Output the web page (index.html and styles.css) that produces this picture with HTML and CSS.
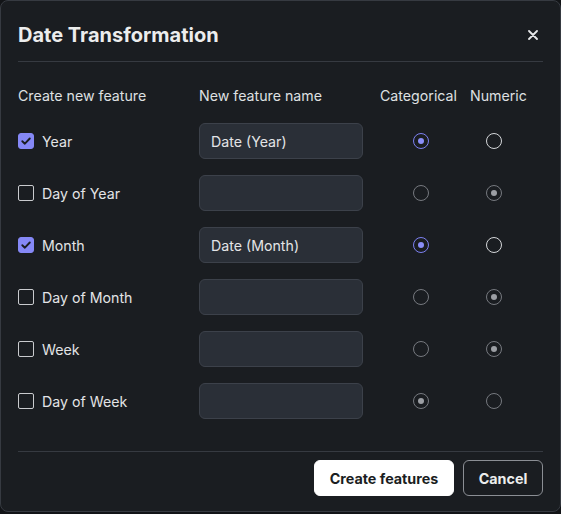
FILE: index.html
```html
<!DOCTYPE html>
<html>
<head>
<meta charset="utf-8">
<link rel="stylesheet" href="styles.css">
</head>
<body>
<div class="modal">
  <div class="head">
    <h1 class="title">Date Transformation</h1>
    <svg class="close" width="10" height="10" viewBox="0 0 10 10"><path d="M1 1L9 9M9 1L1 9" stroke="#e6e7e9" stroke-width="1.8" stroke-linecap="round"/></svg>
  </div>
  <div class="divider"></div>
  <div class="grid">
    <div class="th">Create new feature</div>
    <div class="th">New feature name</div>
    <div class="th">Categorical</div>
    <div class="th">Numeric</div>

    <div class="cell"><span class="cb on"><svg width="12" height="12" viewBox="0 0 12 12"><path d="M2.3 6.2L4.9 8.7L9.8 3.5" fill="none" stroke="#1a1d21" stroke-width="1.9" stroke-linecap="round" stroke-linejoin="round"/></svg></span>Year</div>
    <div class="cell"><div class="input">Date (Year)</div></div>
    <div class="cell c3"><span class="radio sel"></span></div>
    <div class="cell c4"><span class="radio act"></span></div>

    <div class="cell"><span class="cb"></span>Day of Year</div>
    <div class="cell"><div class="input"></div></div>
    <div class="cell c3"><span class="radio dis"></span></div>
    <div class="cell c4"><span class="radio dis dsel"></span></div>

    <div class="cell"><span class="cb on"><svg width="12" height="12" viewBox="0 0 12 12"><path d="M2.3 6.2L4.9 8.7L9.8 3.5" fill="none" stroke="#1a1d21" stroke-width="1.9" stroke-linecap="round" stroke-linejoin="round"/></svg></span>Month</div>
    <div class="cell"><div class="input">Date (Month)</div></div>
    <div class="cell c3"><span class="radio sel"></span></div>
    <div class="cell c4"><span class="radio act"></span></div>

    <div class="cell"><span class="cb"></span>Day of Month</div>
    <div class="cell"><div class="input"></div></div>
    <div class="cell c3"><span class="radio dis"></span></div>
    <div class="cell c4"><span class="radio dis dsel"></span></div>

    <div class="cell"><span class="cb"></span>Week</div>
    <div class="cell"><div class="input"></div></div>
    <div class="cell c3"><span class="radio dis"></span></div>
    <div class="cell c4"><span class="radio dis dsel"></span></div>

    <div class="cell"><span class="cb"></span>Day of Week</div>
    <div class="cell"><div class="input"></div></div>
    <div class="cell c3"><span class="radio dis dsel"></span></div>
    <div class="cell c4"><span class="radio dis"></span></div>
  </div>
  <div class="divider bottom"></div>
  <div class="footer">
    <button class="btn primary">Create features</button>
    <button class="btn secondary">Cancel</button>
  </div>
</div>
</body>
</html>
```
FILE: styles.css
```css
html, body {
  margin: 0;
  padding: 0;
  background: #121417;
}
body {
  font-family: Inter, "Noto Sans", sans-serif;
  color: #e3e4e6;
  width: 561px;
  height: 514px;
  overflow: hidden;
}
.modal {
  box-sizing: border-box;
  width: 561px;
  height: 512px;
  background: #1a1d21;
  border: 1px solid #363a41;
  border-radius: 8px;
  padding: 0 17px;
}
.head {
  box-sizing: border-box;
  height: 60px;
  padding-top: 8px;
  display: flex;
  align-items: center;
  justify-content: space-between;
}
.title {
  margin: 0;
  font-size: 20px;
  font-weight: 700;
  line-height: 24px;
  color: #eceded;
}
.close {
  margin-right: 5px;
}
.divider {
  height: 1px;
  background: #363a41;
}
.grid {
  display: grid;
  grid-template-columns: 181px 181px 90px 73px;
  grid-template-rows: 23px repeat(6, 36px);
  row-gap: 16px;
  padding-top: 22px;
}
.th {
  font-size: 14.2px;
  line-height: 23px;
  color: #dfe0e2;
  white-space: nowrap;
}
.cell {
  display: flex;
  align-items: center;
  font-size: 14.2px;
  color: #e3e4e6;
}
.c3 { padding-left: 33px; }
.c4 { padding-left: 16px; }
.cb {
  box-sizing: border-box;
  width: 16px;
  height: 16px;
  border: 1.5px solid #c9cbce;
  border-radius: 2px;
  margin-right: 8px;
  display: flex;
  align-items: center;
  justify-content: center;
}
.cb.on {
  background: #8588f6;
  border-color: #8588f6;
  border-radius: 3px;
}
.input {
  box-sizing: border-box;
  width: 164px;
  height: 36px;
  background: #2a2f37;
  border: 1px solid #3c414a;
  border-radius: 6px;
  padding: 0 11px;
  display: flex;
  align-items: center;
  font-size: 14.2px;
  color: #e3e4e6;
}
.radio {
  box-sizing: border-box;
  width: 16px;
  height: 16px;
  border-radius: 50%;
  border: 1.5px solid #d4d6d9;
  display: flex;
  align-items: center;
  justify-content: center;
}
.radio.sel {
  border-color: #7c80f0;
}
.radio.sel::after {
  content: "";
  width: 6px;
  height: 6px;
  border-radius: 50%;
  background: #8a8ef8;
}
.radio.dis {
  border-color: #76797f;
}
.radio.dsel::after {
  content: "";
  width: 6px;
  height: 6px;
  border-radius: 50%;
  background: #9c9fa4;
}
.bottom {
  margin-top: 32px;
}
.footer {
  display: flex;
  justify-content: flex-end;
  gap: 9px;
  padding-top: 8px;
}
.btn {
  box-sizing: border-box;
  height: 36px;
  border-radius: 6px;
  font-family: Inter, "Noto Sans", sans-serif;
  font-size: 14.3px;
  font-weight: 700;
  padding: 0;
}
.primary {
  width: 140px;
  background: #ffffff;
  color: #1a1d21;
  border: 1px solid #ffffff;
}
.secondary {
  width: 80px;
  background: #1a1d21;
  color: #eceded;
  border: 1px solid #8b8e94;
}
```
